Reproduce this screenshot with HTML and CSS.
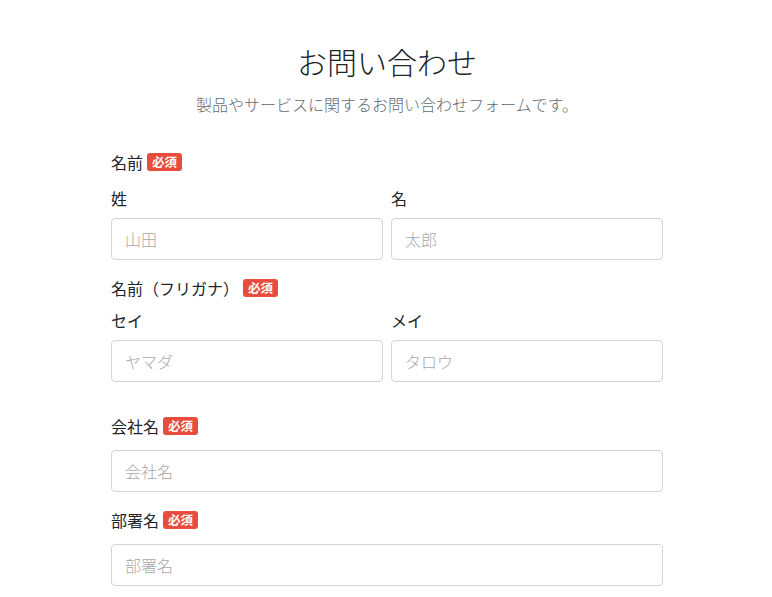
FILE: index.html
```html
<!DOCTYPE html>
<html lang="ja">
<head>
<meta charset="utf-8">
<title>お問い合わせ</title>
<link rel="stylesheet" href="styles.css">
</head>
<body>
<main class="container">
  <header class="page-head">
    <h1 class="title">お問い合わせ</h1>
    <p class="lead">製品やサービスに関するお問い合わせフォームです。</p>
  </header>

  <form class="form">
    <div class="group group-name">
      <div class="label">名前<span class="badge">必須</span></div>
      <div class="row row-first">
        <div class="col">
          <label class="sublabel">姓</label>
          <input class="input" type="text" placeholder="山田">
        </div>
        <div class="col">
          <label class="sublabel">名</label>
          <input class="input" type="text" placeholder="太郎">
        </div>
      </div>
    </div>

    <div class="group group-kana">
      <div class="label">名前（フリガナ）<span class="badge">必須</span></div>
      <div class="row">
        <div class="col">
          <label class="sublabel">セイ</label>
          <input class="input" type="text" placeholder="ヤマダ">
        </div>
        <div class="col">
          <label class="sublabel">メイ</label>
          <input class="input" type="text" placeholder="タロウ">
        </div>
      </div>
    </div>

    <div class="group group-company">
      <div class="label">会社名<span class="badge">必須</span></div>
      <input class="input single" type="text" placeholder="会社名">
    </div>

    <div class="group group-dept">
      <div class="label">部署名<span class="badge">必須</span></div>
      <input class="input single" type="text" placeholder="部署名">
    </div>
  </form>
</main>
</body>
</html>
```

FILE: styles.css
```css
* {
  box-sizing: border-box;
}

html, body {
  margin: 0;
  padding: 0;
  background: #ffffff;
}

body {
  font-family: "Noto Sans CJK JP", "Noto Sans", sans-serif;
  color: #212529;
  font-size: 16px;
  line-height: 24px;
}

.container {
  width: 552px;
  margin: 0 auto;
  position: relative;
  left: 1px;
}

.page-head {
  text-align: center;
  padding-top: 43px;
}

.title {
  margin: 0;
  font-size: 30px;
  line-height: 36px;
  font-weight: 300;
  color: #212529;
}

.lead {
  margin: 13px 0 0;
  font-size: 16px;
  line-height: 24px;
  font-weight: 300;
  color: #5f6b75;
}

.form {
  margin-top: 34px;
}

.label {
  display: flex;
  align-items: center;
  height: 24px;
  font-size: 16px;
  line-height: 24px;
  color: #212529;
}

.badge {
  display: inline-block;
  margin-left: 4px;
  padding: 0 5px;
  height: 18px;
  line-height: 18px;
  font-size: 12.5px;
  font-weight: 700;
  color: #ffffff;
  background: #e74c3c;
  border-radius: 3px;
}

.row {
  display: grid;
  grid-template-columns: 1fr 1fr;
  column-gap: 8px;
  margin-top: 8px;
}

.row-first {
  margin-top: 12px;
}

.col {
  display: flex;
  flex-direction: column;
}

.sublabel {
  display: block;
  height: 24px;
  font-size: 16px;
  line-height: 24px;
  color: #212529;
}

.input {
  display: block;
  width: 100%;
  height: 42px;
  margin-top: 8px;
  padding: 0 13px 1px;
  font-family: "Noto Sans CJK JP", "Noto Sans", sans-serif;
  font-size: 16px;
  font-weight: 300;
  color: #212529;
  background: #ffffff;
  border: 1px solid #d4d4d4;
  border-radius: 4px;
  outline: none;
}

.input::placeholder {
  color: #a8a8a8;
}

.input.single {
  margin-top: 12px;
}

.group-kana {
  margin-top: 16px;
}

.group-company {
  margin-top: 32px;
}

.group-dept {
  margin-top: 16px;
}
```
